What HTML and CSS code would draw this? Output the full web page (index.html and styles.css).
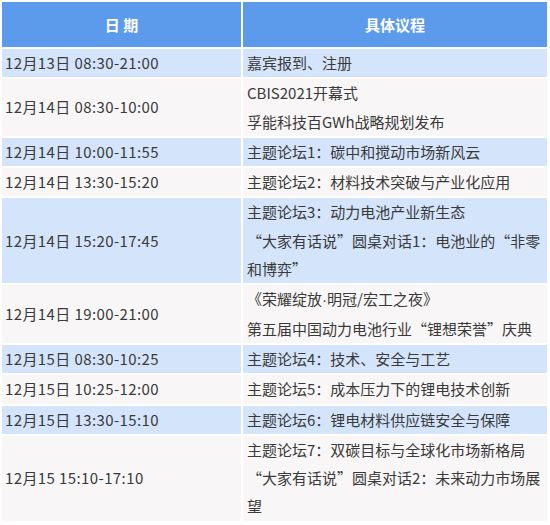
FILE: index.html
```html
<!DOCTYPE html>
<html lang="zh-CN">
<head>
<meta charset="utf-8">
<link rel="stylesheet" href="styles.css">
</head>
<body>
<table class="agenda">
  <colgroup>
    <col class="col-date">
    <col class="col-item">
  </colgroup>
  <thead>
    <tr class="head">
      <th>日&nbsp;期</th>
      <th>具体议程</th>
    </tr>
  </thead>
  <tbody>
    <tr class="blue">
      <td class="date">12月13日 08:30-21:00</td>
      <td class="item">嘉宾报到、注册</td>
    </tr>
    <tr class="light">
      <td class="date">12月14日 08:30-10:00</td>
      <td class="item">CBIS2021开幕式<br>孚能科技百GWh战略规划发布</td>
    </tr>
    <tr class="blue">
      <td class="date">12月14日 10:00-11:55</td>
      <td class="item">主题论坛1：碳中和搅动市场新风云</td>
    </tr>
    <tr class="light">
      <td class="date">12月14日 13:30-15:20</td>
      <td class="item">主题论坛2：材料技术突破与产业化应用</td>
    </tr>
    <tr class="blue">
      <td class="date">12月14日 15:20-17:45</td>
      <td class="item">主题论坛3：动力电池产业新生态<br>“大家有话说”圆桌对话1：电池业的“非零和博弈”</td>
    </tr>
    <tr class="light">
      <td class="date">12月14日 19:00-21:00</td>
      <td class="item">《荣耀绽放<span class="dot">·</span>明冠/宏工之夜》<br>第五届中国动力电池行业“锂想荣誉”庆典</td>
    </tr>
    <tr class="blue">
      <td class="date">12月15日 08:30-10:25</td>
      <td class="item">主题论坛4：技术、安全与工艺</td>
    </tr>
    <tr class="light">
      <td class="date">12月15日 10:25-12:00</td>
      <td class="item">主题论坛5：成本压力下的锂电技术创新</td>
    </tr>
    <tr class="blue">
      <td class="date">12月15日 13:30-15:10</td>
      <td class="item">主题论坛6：锂电材料供应链安全与保障</td>
    </tr>
    <tr class="light">
      <td class="date">12月15 15:10-17:10</td>
      <td class="item">主题论坛7：双碳目标与全球化市场新格局<br>“大家有话说”圆桌对话2：未来动力市场展望</td>
    </tr>
  </tbody>
</table>
</body>
</html>
```

FILE: styles.css
```css
html, body {
  margin: 0;
  padding: 0;
  background: #ffffff;
}

.agenda {
  table-layout: fixed;
  width: 549px;
  border-collapse: separate;
  border-spacing: 2px;
  font-family: "Noto Sans CJK SC", "Noto Sans", sans-serif;
  font-size: 15px;
  line-height: 28.3px;
  color: #3a3a3a;
}

.col-date { width: 239px; }
.col-item { width: 304px; }

.head th {
  background: #5c9bec;
  color: #ffffff;
  font-weight: bold;
  height: 45px;
  line-height: 28px;
  padding: 0;
  text-align: center;
  vertical-align: middle;
}

.agenda td {
  padding: 0;
  vertical-align: middle;
  text-align: left;
}

.agenda td.date {
  padding-left: 3px;
  letter-spacing: 0.4px;
}

.agenda td.item {
  padding-left: 4px;
  padding-right: 2px;
}

.dot {
  font-family: "Liberation Sans", sans-serif;
}

.blue td {
  background: #d3e4fb;
}

.light td {
  background: #f8f6f6;
}
```
